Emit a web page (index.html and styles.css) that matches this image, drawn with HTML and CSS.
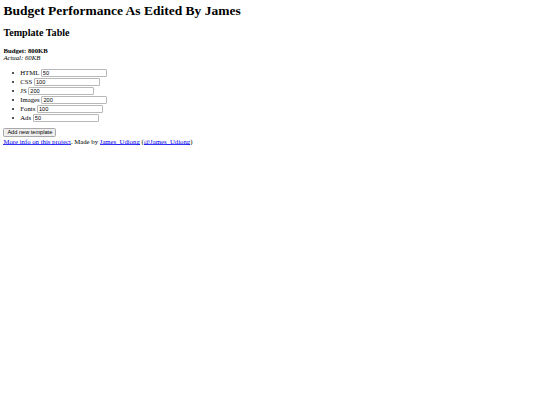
FILE: index.html
```html
<!DOCTYPE html>
<html>
<head>
<meta charset="utf-8">
<title>Budget Performance</title>
<link rel="stylesheet" href="styles.css">
</head>
<body>
<h1 class="title">Budget Performance As Edited By James</h1>
<h2 class="subtitle">Template Table</h2>
<div class="budget">
  <h4 class="budget-total">Budget: 800KB</h4>
  <em class="budget-actual">Actual: 60KB</em>
</div>
<ul class="templates">
  <li class="template">HTML <input class="field" type="text" value="50"></li>
  <li class="template">CSS <input class="field" type="text" value="100"></li>
  <li class="template">JS <input class="field" type="text" value="200"></li>
  <li class="template">Images <input class="field" type="text" value="200"></li>
  <li class="template">Fonts <input class="field" type="text" value="100"></li>
  <li class="template">Ads <input class="field" type="text" value="50"></li>
</ul>
<div class="actions"><button class="add-btn" type="button">Add new template</button></div>
<div class="footer"><a href="#" class="link">More info on this project</a>. Made by <a href="#" class="link">James_Udiong</a> (<a href="#" class="link">@James_Udiong</a>)</div>
</body>
</html>
```

FILE: styles.css
```css
html {
  background: #ffffff;
}
body {
  margin: 3.375px;
  font-family: "Liberation Serif", "Times New Roman", serif;
  font-size: 6.75px;
  color: #000000;
}
.title {
  font-size: 13.5px;
  font-weight: bold;
  margin: 0;
}
.subtitle {
  font-size: 10.125px;
  font-weight: bold;
  margin: 7.2px 0 0;
}
.budget {
  margin-top: 9.4px;
}
.budget-total {
  font-size: 6.75px;
  font-weight: bold;
  margin: 0;
}
.budget-actual {
  display: block;
  font-style: italic;
}
.templates {
  list-style: none;
  margin: 8px 0 0;
  padding-left: 16.875px;
}
.template {
  position: relative;
  height: 9px;
  line-height: 8px;
}
.template::before {
  content: "";
  position: absolute;
  left: -8.3px;
  top: 3px;
  width: 2.2px;
  height: 2.2px;
  border-radius: 50%;
  background: #1a1a1a;
}
.field {
  font-family: "Liberation Sans", Arial, sans-serif;
  font-size: 5.625px;
  width: 66px;
  height: 8px;
  box-sizing: border-box;
  padding: 0 1px;
  border: 1px solid #b8b8b8;
  border-radius: 1px;
  vertical-align: top;
  margin: 0;
}
.actions {
  margin-top: 4.7px;
}
.add-btn {
  font-family: "Liberation Sans", Arial, sans-serif;
  font-size: 5.625px;
  height: 9px;
  padding: 0 3px;
  line-height: 7px;
  border: 1px solid #a9a9a9;
  border-radius: 1.5px;
  background: #efefef;
  color: #000;
  margin: 0;
  display: block;
}
.footer {
  margin-top: 1px;
}
.link {
  color: #0000ee;
  text-decoration: none;
  background-image: linear-gradient(#0000ee, #0000ee);
  background-repeat: no-repeat;
  background-position: 0 100%;
  background-size: 100% 0.8px;
}
```
